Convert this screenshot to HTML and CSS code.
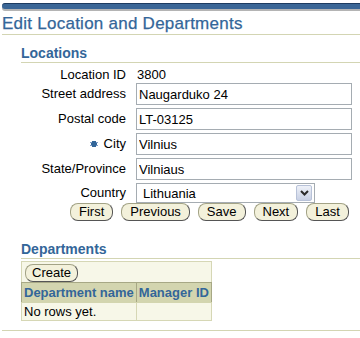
FILE: index.html
```html
<!DOCTYPE html>
<html lang="en">
<head>
    <meta charset="UTF-8">
    <title>Edit Location and Departments</title>
    <link rel="stylesheet" href="styles.css">
</head>
<body>
    <div class="brand-bar"></div>
    <h1 class="page-title">Edit Location and Departments</h1>

    <div class="section">
        <h2 class="section-title">Locations</h2>
        <div class="form-grid">
            <label class="form-label first-label">Location ID</label>
            <div class="form-value first-label">3800</div>

            <label class="form-label">Street address</label>
            <input class="text-field" type="text" value="Naugarduko 24">

            <label class="form-label">Postal code</label>
            <input class="text-field" type="text" value="LT-03125">

            <label class="form-label">
                <svg class="required-icon" width="8" height="6" viewBox="0 0 8 6">
                    <rect x="0" y="1" width="8" height="1" fill="#7d9bc7"/>
                    <rect x="0" y="4" width="8" height="1" fill="#7d9bc7"/>
                    <rect x="2" y="0" width="4" height="6" fill="#336699"/>
                    <rect x="1" y="2" width="6" height="2" fill="#336699"/>
                </svg>
                City
            </label>
            <input class="text-field" type="text" value="Vilnius">

            <label class="form-label">State/Province</label>
            <input class="text-field" type="text" value="Vilniaus">

            <label class="form-label">Country</label>
            <div class="select-box">
                <span class="select-text">Lithuania</span>
                <span class="select-arrow">
                    <svg width="9" height="6" viewBox="0 0 9 6">
                        <path d="M1 1 L4.5 4.5 L8 1" fill="none" stroke="#2b2b2b" stroke-width="2"/>
                    </svg>
                </span>
            </div>
        </div>

        <div class="nav-buttons">
            <button class="pill-button">First</button>
            <button class="pill-button">Previous</button>
            <button class="pill-button">Save</button>
            <button class="pill-button">Next</button>
            <button class="pill-button">Last</button>
        </div>
    </div>

    <div class="section">
        <h2 class="section-title dept-title">Departments</h2>
        <table class="dept-table">
            <tr class="toolbar-row">
                <td colspan="2"><button class="pill-button">Create</button></td>
            </tr>
            <tr class="header-row">
                <th>Department name</th>
                <th>Manager ID</th>
            </tr>
            <tr class="data-row">
                <td>No rows yet.</td>
                <td></td>
            </tr>
        </table>
    </div>

    <div class="footer-line"></div>
</body>
</html>
```

FILE: styles.css
```css
/* Oracle-ish form page */
body {
    margin: 0;
    font-family: "Liberation Sans", Arial, sans-serif;
    font-size: 13px;
    color: #000;
    background: #fff;
}

.brand-bar {
    margin: 3px 0 0 2px;
    height: 5px;
    background-color: #3a6696;
    border-top: 1px solid #1d3b60;
    border-radius: 3px 0 0 3px;
    box-shadow: 0 2px 0 #b4b4b4;
}

.page-title {
    margin: 5px 0 0 2px;
    font-size: 17px;
    font-weight: normal;
    letter-spacing: 0.25px;
    line-height: 20px;
    color: #336699;
    -webkit-text-stroke: 0.25px #336699;
    border-bottom: 1px solid #d3d5b3;
}

.section {
    padding-left: 21px;
}

.section-title {
    margin: 9px 0 0 0;
    font-size: 14px;
    font-weight: bold;
    line-height: 18px;
    color: #336699;
    border-bottom: 1px solid #d3d5b3;
}

.form-grid {
    display: grid;
    grid-template-columns: 105px 216px;
    grid-template-rows: 17px 22px 22px 22px 22px 20px;
    column-gap: 10px;
    row-gap: 3px;
    align-items: center;
}

.form-label {
    text-align: right;
    line-height: 16px;
}

.first-label {
    align-self: end;
    line-height: 13px;
    margin-bottom: -1px;
}

.required-icon {
    vertical-align: 1px;
    margin-right: 2px;
}

.form-value {
    padding-left: 1px;
}

.text-field {
    box-sizing: border-box;
    width: 216px;
    height: 22px;
    margin: 0;
    padding: 0 2px;
    font-family: inherit;
    font-size: 13px;
    color: #000;
    border: 1px solid #a5acb2;
    background: #fff;
}

.select-box {
    box-sizing: border-box;
    width: 179px;
    height: 20px;
    display: flex;
    align-items: center;
    justify-content: space-between;
    border: 1px solid #a5acb2;
    padding: 0 2px 0 6px;
}

.select-arrow {
    box-sizing: border-box;
    width: 16px;
    height: 16px;
    display: flex;
    align-items: center;
    justify-content: center;
    border: 1px solid #b8c2d8;
    border-radius: 2px;
    background: linear-gradient(#eef1f8, #c8d0e4);
}

.nav-buttons {
    display: flex;
    gap: 8px;
    margin: 0 0 0 49px;
}

.pill-button {
    height: 18px;
    padding: 0 8px;
    font-family: inherit;
    font-size: 13px;
    line-height: 14px;
    color: #000;
    background-color: #f3f1db;
    border: 1px solid #a3a386;
    border-right-color: #555;
    border-bottom-color: #555;
    border-radius: 8px;
    cursor: pointer;
}

.dept-title {
    margin-top: 19px;
}

.dept-table {
    margin-top: 2px;
    border-collapse: collapse;
    border: 1px solid #d6d7b5;
    background-color: #f7f7e8;
}

.dept-table td,
.dept-table th {
    padding: 0 2px;
    text-align: left;
    white-space: nowrap;
}

.toolbar-row td {
    height: 19px;
    padding: 1px 3px 0;
}

.toolbar-row .pill-button {
    padding: 0 6px;
}

.header-row th {
    height: 19px;
    font-weight: bold;
    color: #336699;
    background-color: #d3d5af;
    border: 1px solid #a7a885;
    border-left: none;
    border-bottom-color: #d3d5af;
}

.header-row th:first-child {
    border-left: 1px solid #a7a885;
}

.data-row td {
    height: 17px;
    border-right: 1px solid #d6d7b5;
}

.footer-line {
    margin: 9px 0 0 2px;
    border-top: 1px solid #d3d5b3;
}
```
